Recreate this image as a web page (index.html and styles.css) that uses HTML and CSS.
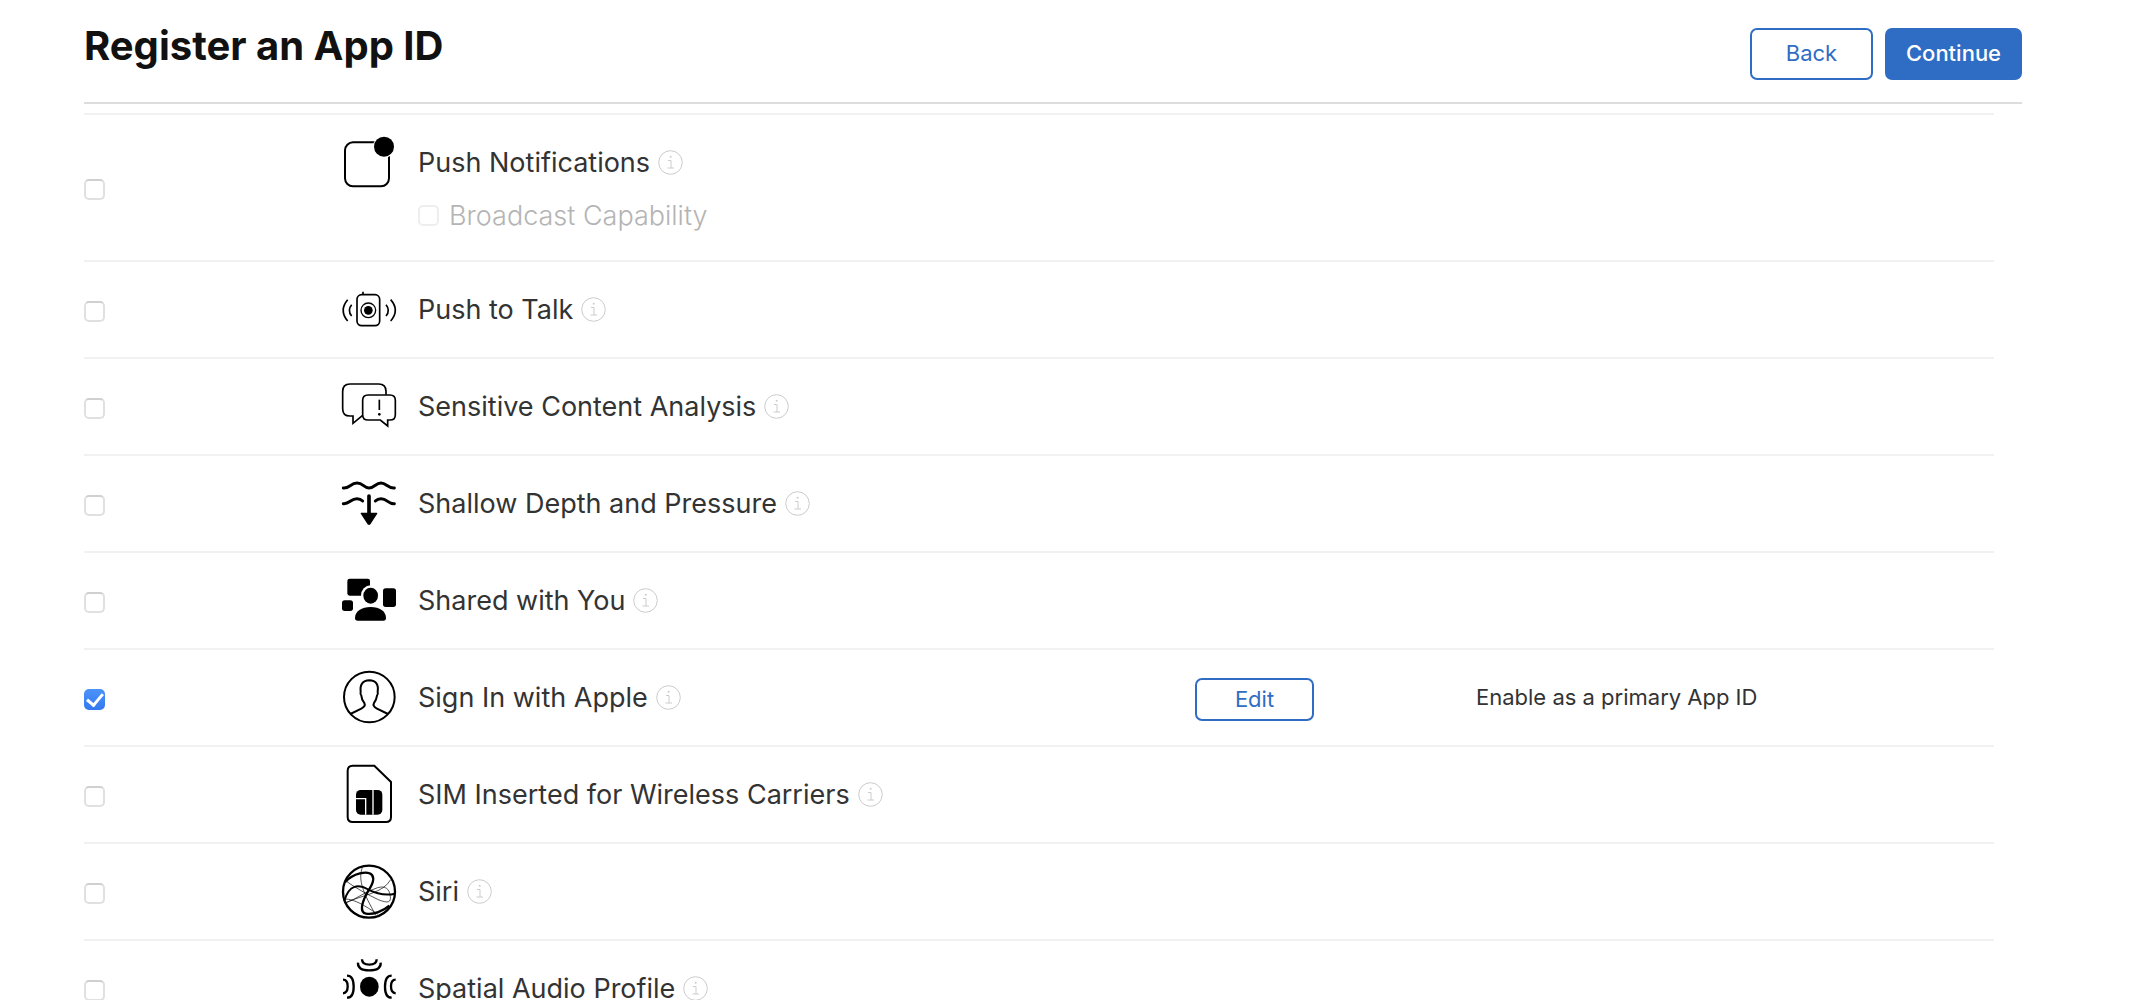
FILE: index.html
```html
<!DOCTYPE html>
<html lang="en">
<head>
  <meta charset="UTF-8">
  <meta name="viewport" content="width=device-width, initial-scale=1.0">
  <title>Register an App ID</title>
  <link rel="stylesheet" href="styles.css">
</head>
<body>
  <svg class="sprite" aria-hidden="true">
    <symbol id="info" viewBox="0 0 25 25">
      <circle cx="12.5" cy="12.5" r="11.8"/>
      <path d="M10 10.5h3v7.500M9.500 18h6.500"/>
      <circle class="dot" cx="12.700" cy="6.700" r="1"/>
    </symbol>
  </svg>

  <header class="page-header">
    <h1>Register an App ID</h1>
    <div class="actions">
      <button type="button" class="btn btn-back">Back</button>
      <button type="button" class="btn btn-primary">Continue</button>
    </div>
  </header>

  <main class="capabilities">
    <table>
      <colgroup>
        <col class="col-check">
        <col class="col-name">
        <col class="col-action">
        <col class="col-note">
      </colgroup>
      <tbody>
        <tr class="tall">
          <td><input type="checkbox" id="push"></td>
          <td>
            <div class="capability">
              <svg class="icon" viewBox="36 47 162 162">
                <rect x="45" y="69" width="132" height="132" rx="24" fill="none" stroke="#000" stroke-width="6"/>
                <circle cx="162" cy="82" r="33" fill="#fff"/>
                <circle cx="162" cy="82" r="30"/>
              </svg>
              <label for="push">Push Notifications</label>
              <svg class="info"><use href="#info"/></svg>
            </div>
            <div class="sub-option">
              <input type="checkbox" id="broadcast" disabled>
              <label for="broadcast">Broadcast Capability</label>
            </div>
          </td>
          <td></td>
          <td></td>
        </tr>
        <tr>
          <td><input type="checkbox" id="talk"></td>
          <td>
            <div class="capability">
              <svg class="icon" viewBox="36 8 162 162">
                <g fill="none" stroke="#000" stroke-width="5">
                  <rect x="81" y="46" width="68" height="93" rx="14"/>
                  <path d="M99 37v9M53 61q-27 32 0 64M65 76q-14 17 0 34M168 76q14 17 0 34M182 61q28 32 0 64"/>
                  <circle cx="115" cy="93" r="22" stroke-width="4"/>
                </g>
                <circle cx="115" cy="93" r="13"/>
              </svg>
              <label for="talk">Push to Talk</label>
              <svg class="info"><use href="#info"/></svg>
            </div>
          </td>
          <td></td>
          <td></td>
        </tr>
        <tr>
          <td><input type="checkbox" id="sensitive"></td>
          <td>
            <div class="capability">
              <svg class="icon" viewBox="36 299 162 162">
                <g fill="none" stroke="#000" stroke-width="5">
                  <path d="M168 346v-10q0-22-22-22H60q-22 0-22 22v52q0 22 22 22h9v22l29-24"/>
                  <path d="M114 347h66q16 0 16 16v43q0 16-16 16h-7v18l-22-18h-37q-16 0-16-16v-43q0-16 16-16z"/>
                  <path d="M148 361v31"/>
                </g>
                <circle cx="148" cy="405" r="4"/>
              </svg>
              <label for="sensitive">Sensitive Content Analysis</label>
              <svg class="info"><use href="#info"/></svg>
            </div>
          </td>
          <td></td>
          <td></td>
        </tr>
        <tr>
          <td><input type="checkbox" id="depth"></td>
          <td>
            <div class="capability">
              <svg class="icon" viewBox="36 49 162 162">
                <g fill="none" stroke="#000" stroke-width="9" stroke-linecap="round">
                  <path d="M40 85c18 2 22-15 41-15s20 15 36 15 20-15 36-15 22 17 40 15"/>
                  <path d="M40 132c18 2 22-15 41-15q10 0 17 7M136 124q7-7 17-7c19 0 22 17 40 15"/>
                  <path d="M117 109v52" stroke-width="11"/>
                </g>
                <path d="M94 161h46l-20 31q-3 3-6 0z" stroke="#000" stroke-width="4" stroke-linejoin="round"/>
              </svg>
              <label for="depth">Shallow Depth and Pressure</label>
              <svg class="info"><use href="#info"/></svg>
            </div>
          </td>
          <td></td>
          <td></td>
        </tr>
        <tr>
          <td><input type="checkbox" id="shared"></td>
          <td>
            <div class="capability">
              <svg class="icon" viewBox="36 340 162 162">
                <rect x="52" y="357" width="68" height="51" rx="7"/>
                <ellipse cx="122" cy="408" rx="29" ry="31" fill="#fff"/>
                <ellipse cx="122" cy="408" rx="22" ry="24"/>
                <rect x="159" y="386" width="39" height="56" rx="8"/>
                <rect x="36" y="422" width="33" height="32" rx="8"/>
                <path d="M75 475c0-20 20-33 47-33s46 13 46 33q0 8-8 8H83q-8 0-8-8z"/>
              </svg>
              <label for="shared">Shared with You</label>
              <svg class="info"><use href="#info"/></svg>
            </div>
          </td>
          <td></td>
          <td></td>
        </tr>
        <tr>
          <td><input type="checkbox" id="signin" checked></td>
          <td>
            <div class="capability">
              <svg class="icon" viewBox="36 31 162 162">
                <g fill="none" stroke="#000" stroke-width="6">
                  <circle cx="118" cy="112" r="76"/>
                  <path d="M61 163l33-16q14-7 9-17-8-8-9-22-4-4-2-11-4-34 26-35 30 1 25 35 2 7-2 11-2 14-9 22-5 10 9 17l33 16"/>
                </g>
              </svg>
              <label for="signin">Sign In with Apple</label>
              <svg class="info"><use href="#info"/></svg>
            </div>
          </td>
          <td><button type="button" class="btn btn-edit">Edit</button></td>
          <td>Enable as a primary App ID</td>
        </tr>
        <tr>
          <td><input type="checkbox" id="sim"></td>
          <td>
            <div class="capability">
              <svg class="icon" viewBox="36 322 162 162">
                <path d="M68 318h65l50 49v105q0 15-15 15H68q-15 0-15-15V333q0-15 15-15z" fill="none" stroke="#000" stroke-width="6"/>
                <rect x="78" y="391" width="79" height="74" rx="14"/>
                <path d="M78 417h29v48M129 391v74" fill="none" stroke="#fff" stroke-width="4"/>
              </svg>
              <label for="sim">SIM Inserted for Wireless Carriers</label>
              <svg class="info"><use href="#info"/></svg>
            </div>
          </td>
          <td></td>
          <td></td>
        </tr>
        <tr>
          <td><input type="checkbox" id="siri"></td>
          <td>
            <div class="capability">
              <svg class="icon" viewBox="36 43 162 162">
                <g fill="none" stroke="#000">
                  <circle cx="117" cy="126" r="78" stroke-width="7"/>
                  <path d="M46 97c22-26 68-36 80-21 12 17-8 40-18 60-12 24-20 52 0 56 22 4 52-8 70-24" stroke-width="7"/>
                  <path d="M43 154c14-52 44-50 72-34 30 15 55 18 80 12" stroke-width="6"/>
                  <path d="M97 53c-14 40 4 78 40 143M45 92c30 22 70 44 100 58 30 12 38 8 36-10-3-24-16-32-38-26-34 10-64 34-98 47M44 148c30 0 60 20 100 46M44 160c60-26 115-30 138-70" stroke-width="2"/>
                </g>
              </svg>
              <label for="siri">Siri</label>
              <svg class="info"><use href="#info"/></svg>
            </div>
          </td>
          <td></td>
          <td></td>
        </tr>
        <tr>
          <td><input type="checkbox" id="spatial"></td>
          <td>
            <div class="capability">
              <svg class="icon" viewBox="36 334 162 162">
                <ellipse cx="118" cy="411" rx="28" ry="30"/>
                <g fill="none" stroke="#000" stroke-width="7">
                  <path d="M96 329q0 16 22 16t22-16M84 339q-2 23 34 23t34-23"/>
                  <path d="M39 390q14 0 14 20t-14 21M51 378q20 0 20 33t-20 33"/>
                  <path d="M197 390q-14 0-14 20t14 21M185 378q-20 0-20 33t20 33"/>
                  <path d="M96 493q0-16 22-16t22 16M84 483q-2-23 34-23t34 23"/>
                </g>
              </svg>
              <label for="spatial">Spatial Audio Profile</label>
              <svg class="info"><use href="#info"/></svg>
            </div>
          </td>
          <td></td>
          <td></td>
        </tr>
      </tbody>
    </table>
  </main>
</body>
</html>
```
FILE: styles.css
```css
* {
  box-sizing: border-box;
}
body {
  margin: 0;
  padding: 0 108px 0 84px;
  height: 100vh;
  display: flex;
  flex-direction: column;
  overflow: hidden;
  background: #fff;
  color: #333;
  font-family: Inter, "Liberation Sans", sans-serif;
  font-size: 27px;
}
.sprite {
  position: absolute;
  width: 0;
  height: 0;
}

/* header */
.page-header {
  display: flex;
  justify-content: space-between;
  align-items: flex-start;
  flex-shrink: 0;
  padding: 22px 0;
  border-bottom: 2px solid #ddd;
}
h1 {
  margin: 0;
  color: #111;
  font-size: 40px;
  line-height: 48px;
  font-weight: 700;
}
.actions {
  display: flex;
  gap: 12px;
  padding-top: 6px;
}
.btn {
  height: 52px;
  padding: 0 18px 2px;
  border: 2px solid #2f6dc4;
  border-radius: 7px;
  background: #fff;
  color: #2f6dc4;
  font-family: inherit;
  font-size: 22px;
  cursor: pointer;
}
.btn-back {
  min-width: 123px;
}
.btn-primary {
  min-width: 137px;
  padding: 0 12px 2px;
  background: #2f6dc4;
  color: #fff;
  font-weight: 500;
}
.btn-edit {
  display: block;
  width: 119px;
  height: 43px;
  margin-top: 5px;
}

/* list of capabilities */
.capabilities {
  flex: 1;
  min-height: 0;
  margin: 9px 28px 0 0;
  overflow-y: auto;
  scrollbar-width: none;
}
table {
  width: 100%;
  table-layout: fixed;
  border-spacing: 0;
}
.col-check {
  width: 258px;
}
.col-action {
  width: 281px;
}
.col-note {
  width: 518px;
}
td {
  height: 97px;
  padding: 0 0 1px;
  border-top: 2px solid #f1f1f1;
  vertical-align: middle;
}
td:last-child {
  font-size: 22px;
}
.tall td {
  height: 147px;
  padding: 1px 0 0;
}
.capability {
  display: flex;
  align-items: center;
  height: 54px;
}
.icon {
  width: 54px;
  height: 54px;
  margin-right: 22px;
  overflow: visible;
}
.info {
  width: 25px;
  height: 25px;
  margin-left: 8px;
  fill: none;
  stroke: #ccc;
}
.dot {
  fill: #ccc;
  stroke: none;
}
.sub-option {
  display: flex;
  align-items: center;
  gap: 10px;
  height: 52px;
  padding-left: 76px;
  color: #b4b4b4;
  font-weight: 300;
}

input[type="checkbox"] {
  appearance: none;
  display: grid;
  place-content: center;
  width: 21px;
  height: 21px;
  margin: 0;
  border: 2px solid #e0e0e0;
  border-top-color: #d0d0d0;
  border-radius: 5px;
  background: #fff;
}
td > input[type="checkbox"] {
  margin-top: 5px;
}
.tall td > input[type="checkbox"] {
  margin-top: 3px;
}
input[type="checkbox"]:checked {
  border: 0;
  background: linear-gradient(#4b93f8, #3478f0);
}
input[type="checkbox"]:checked::after {
  content: "";
  width: 7px;
  height: 13px;
  margin-bottom: 3px;
  border: solid #fff;
  border-width: 0 3px 3px 0;
  transform: rotate(40deg);
}
input[type="checkbox"]:disabled {
  border-color: #eee;
}
```
